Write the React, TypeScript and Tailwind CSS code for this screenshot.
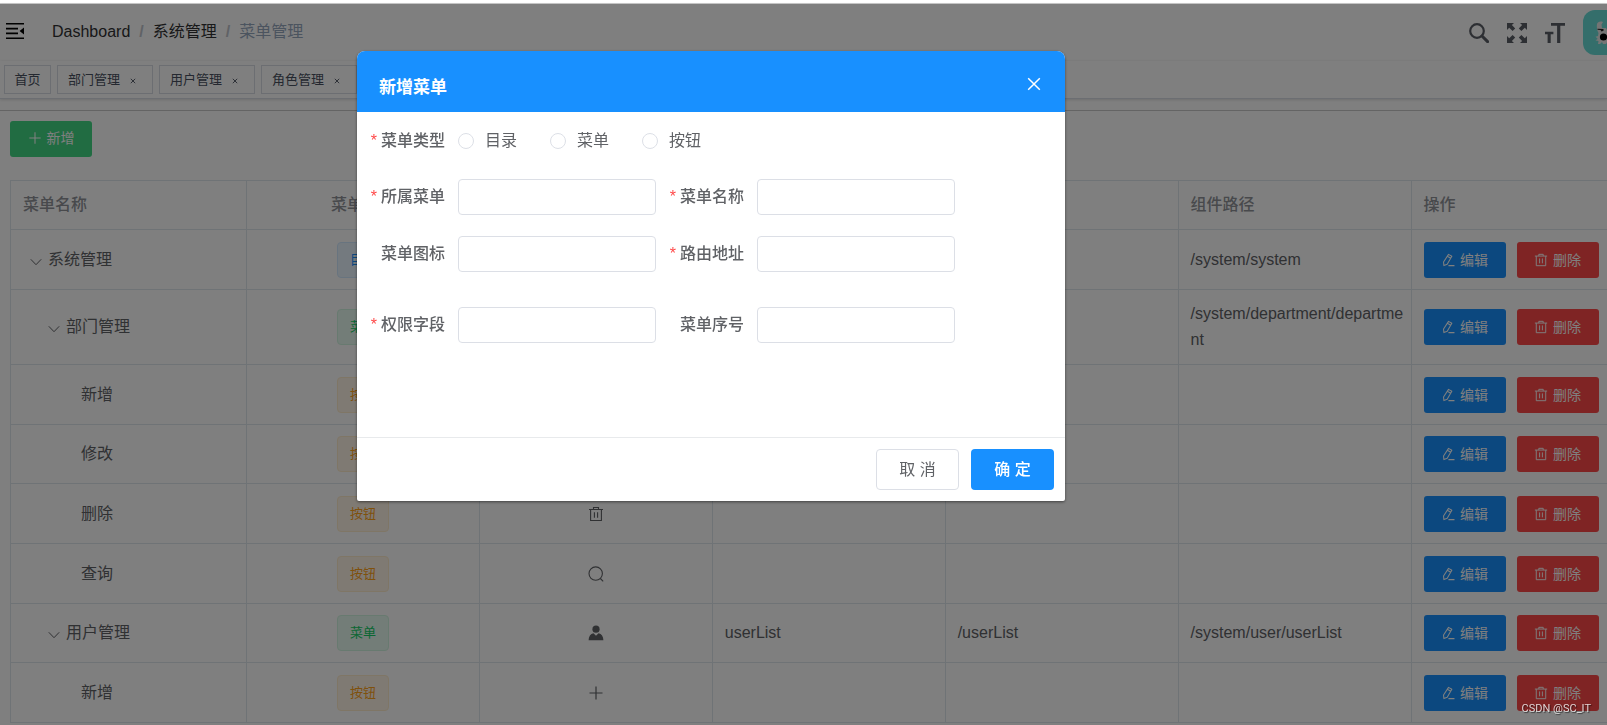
import { useState } from 'react';
import type { ReactNode } from 'react';
import clsx from 'clsx';

type MenuType = '目录' | '菜单' | '按钮';

interface MenuRow {
  id: number;
  name: string;
  level: number;
  type: MenuType;
  icon: ReactNode;
  routeName?: string;
  path?: string;
  component?: string;
}

const menuTypes: MenuType[] = ['目录', '菜单', '按钮'];

const tagStyles: Record<MenuType, string> = {
  目录: 'bg-[#e8f4ff] border-[#d1e9ff] text-[#1890ff]',
  菜单: 'bg-[#e7faf0] border-[#d0f5e0] text-[#13ce66]',
  按钮: 'bg-[#fff4e6] border-[#ffeccc] text-[#ffa31a]',
};

// Iconos
function PlusIcon({ className }: { className?: string }) {
  return (
    <svg viewBox="0 0 16 16" className={className} fill="none" stroke="currentColor" strokeWidth="1.2">
      <path d="M8 1.5v13M1.5 8h13" />
    </svg>
  );
}

function DeleteIcon({ className }: { className?: string }) {
  return (
    <svg viewBox="0 0 16 16" className={className} fill="none" stroke="currentColor" strokeWidth="1.1">
      <path d="M1 3.5h14M5.5 3.3V1.5h5v1.8M2.6 3.6v10.9h10.8V3.6M6.4 6.2v5.6M9.6 6.2v5.6" />
    </svg>
  );
}

function EditIcon({ className }: { className?: string }) {
  return (
    <svg viewBox="0 0 16 16" className={className} fill="none" stroke="currentColor" strokeWidth="1.2" strokeLinejoin="round">
      <path d="M8.6 1.6l3.8 2.2-5.3 9-3.8 1.6-.4-4.1zM7.3 3.8l3.8 2.2M8.5 14.4h6.9" />
    </svg>
  );
}

function SearchThinIcon({ className }: { className?: string }) {
  return (
    <svg viewBox="0 0 16 16" className={className} fill="none" stroke="currentColor" strokeWidth="1.1">
      <circle cx="7.7" cy="7.6" r="6.7" />
      <path d="M12.4 12.5l2.8 2.8" />
    </svg>
  );
}

function UserIcon({ className }: { className?: string }) {
  return (
    <svg viewBox="0 0 16 16" className={className} fill="currentColor">
      <circle cx="8" cy="4.2" r="3.6" />
      <path d="M5.4 8.3L8 10.8l2.6-2.5c2.9.7 4.8 3.3 4.8 6.9H.6c0-3.6 1.9-6.2 4.8-6.9z" />
    </svg>
  );
}

function ChevronIcon() {
  return (
    <svg viewBox="0 0 12 12" className="w-3 h-3 mt-1" fill="none" stroke="currentColor" strokeWidth="1">
      <path d="M.8 3.3L6 8.7l5.2-5.4" />
    </svg>
  );
}

function FoldIcon() {
  return (
    <svg viewBox="0 0 18 16" className="w-[18px] h-4" fill="currentColor">
      <path d="M0 0h18v1.6H0zM0 4.8h12v1.6H0zM0 9.6h12v1.6H0zM0 14.4h18V16H0zM18 4.6v6.8L13.6 8z" />
    </svg>
  );
}

function HeaderSearchIcon() {
  return (
    <svg viewBox="0 0 20 20" className="w-5 h-5" fill="none" stroke="currentColor">
      <circle cx="8" cy="8" r="6.8" strokeWidth="2.2" />
      <path d="M13 13l5.6 5.6" strokeWidth="3" strokeLinecap="round" />
    </svg>
  );
}

function FullscreenIcon() {
  return (
    <svg viewBox="0 0 20 20" className="w-5 h-5" fill="currentColor">
      <path d="M0 0h7L4.9 2.1l3.3 3.3-2.6 2.6-3.4-3.3L0 7z" />
      <path d="M20 0v7l-2.2-2.3L14.4 8l-2.6-2.6 3.3-3.3L13 0z" />
      <path d="M0 20v-7l2.2 2.3L5.6 12l2.6 2.6-3.3 3.3L7 20z" />
      <path d="M20 20h-7l2.1-2.1-3.3-3.3 2.6-2.6 3.4 3.3L20 13z" />
    </svg>
  );
}

function FontSizeIcon() {
  return (
    <svg viewBox="0 0 20 20" className="w-5 h-5" fill="currentColor">
      <path d="M6 0h14v2.7h-4.7V20h-3.2V2.7H6zM0 8.8h8.4v2.4H5.7V20H2.6v-8.8H0z" />
    </svg>
  );
}

function AvatarImage() {
  return (
    <svg viewBox="0 0 45 45" className="w-[45px] h-[45px] rounded-xl bg-[#68dcd6]">
      <path
        d="M14 14c.5-2 3-3 6-2l-1.5 2.5.5 3.5h4l2 4v9l-2 3h-3l-1-2-2 2h-2l.5-3-3-.5 2.2-1.8-2.2-2 2.5-.7.5-3c-1.5-2.500-2-5.500-1.500-9z"
        fill="#e8e8e8"
      />
      <path d="M14.500 18.800l6 .2v1.800l-2 .6-1-1.400-3-.2z" fill="#222" />
      <circle cx="20.500" cy="27" r="3.600" fill="#000" />
    </svg>
  );
}

const visitedTabs = [
  { title: '首页', affix: true },
  { title: '部门管理' },
  { title: '用户管理' },
  { title: '角色管理' },
];

const rows: MenuRow[] = [
  { id: 1, name: '系统管理', level: 0, type: '目录', icon: null, component: '/system/system' },
  { id: 2, name: '部门管理', level: 1, type: '菜单', icon: null, component: '/system/department/department' },
  { id: 3, name: '新增', level: 2, type: '按钮', icon: <PlusIcon className="w-4 h-4" /> },
  { id: 4, name: '修改', level: 2, type: '按钮', icon: <EditIcon className="w-4 h-4" /> },
  { id: 5, name: '删除', level: 2, type: '按钮', icon: <DeleteIcon className="w-4 h-4" /> },
  { id: 6, name: '查询', level: 2, type: '按钮', icon: <SearchThinIcon className="w-4 h-4" /> },
  { id: 7, name: '用户管理', level: 1, type: '菜单', icon: <UserIcon className="w-4 h-4" />, routeName: 'userList', path: '/userList', component: '/system/user/userList' },
  { id: 8, name: '新增', level: 2, type: '按钮', icon: <PlusIcon className="w-4 h-4" /> },
];

function Navbar() {
  return (
    <header className="relative flex items-center h-[57px] pl-1.5 bg-white shadow-[0_1px_4px_rgba(0,21,41,0.08)]">
      <button type="button" aria-label="折叠" className="pb-1 text-black">
        <FoldIcon />
      </button>
      <nav className="flex items-center gap-[9px] ml-7 pb-0.5 text-[#303133]">
        <a href="#dashboard">Dashboard</a>
        <span className="font-bold text-[#c0c4cc]">/</span>
        <a href="#system">系统管理</a>
        <span className="font-bold text-[#c0c4cc]">/</span>
        <span className="text-[#97a8be]">菜单管理</span>
      </nav>
      <div className="flex items-center gap-[18px] ml-auto -mr-[21px] text-[#5a5e66]">
        <button type="button" aria-label="搜索">
          <HeaderSearchIcon />
        </button>
        <button type="button" aria-label="全屏">
          <FullscreenIcon />
        </button>
        <button type="button" aria-label="字号">
          <FontSizeIcon />
        </button>
        <AvatarImage />
      </div>
    </header>
  );
}

function TagsView() {
  return (
    <div className="relative flex items-center gap-1.5 h-[38px] px-1 bg-white border-b border-[#d8dce5] shadow-[0_1px_3px_rgba(0,0,0,0.12),0_0_3px_rgba(0,0,0,0.04)]">
      {visitedTabs.map((tab) => (
        <a
          key={tab.title}
          href="#tab"
          className={clsx(
            'flex items-center h-[29px] border border-[#d8dce5] bg-white text-[13px] text-[#495060]',
            tab.affix ? 'w-[47px] justify-center' : 'w-24 pl-2.5'
          )}
        >
          {tab.title}
          {!tab.affix && (
            <svg viewBox="0 0 6 6" className="w-1.5 h-1.5 ml-2.5 mt-0.5" stroke="currentColor" strokeWidth="0.9">
              <path d="M.8.8l4.400 4.400M5.200.8L.8 5.200" />
            </svg>
          )}
        </a>
      ))}
    </div>
  );
}

function MenuTable() {
  const th = 'border border-[#dfe6ec] pl-3 pr-1 font-medium text-left';
  const td = 'border border-[#dfe6ec] pl-3 pr-1 break-all';

  return (
    <table className="w-full mt-[23px] table-fixed border-collapse border-r-hidden leading-[26px] text-[#606266]">
      <thead>
        <tr className="h-[49px] text-[#909399]">
          <th className={clsx(th, 'w-[236px]')}>菜单名称</th>
          <th className="border border-[#dfe6ec] font-medium text-center">菜单类型</th>
          <th className="border border-[#dfe6ec]" />
          <th className="border border-[#dfe6ec]" />
          <th className="border border-[#dfe6ec]" />
          <th className={th}>组件路径</th>
          <th className="w-[196px] border-y border-l border-[#dfe6ec] pl-3 font-medium text-left">操作</th>
        </tr>
      </thead>
      <tbody>
        {rows.map((row) => (
          <tr key={row.id} className={row.id === 2 ? 'h-[75px]' : 'h-[60px] nth-[3n+4]:h-[59px]'}>
            <td className={td}>
              <div className="flex items-center">
                {row.level === 1 && <span className="w-[18px]" />}
                {row.level === 2 && <span className="w-[58px]" />}
                {row.level < 2 && (
                  <button type="button" aria-label="展开" className="flex justify-center w-[25px]">
                    <ChevronIcon />
                  </button>
                )}
                {row.name}
              </div>
            </td>
            <td className="border border-[#dfe6ec]">
              <span
                className={clsx(
                  'flex items-center justify-center w-[52px] h-9 mx-auto border rounded text-[13px]',
                  tagStyles[row.type]
                )}
              >
                {row.type}
              </span>
            </td>
            <td className="border border-[#dfe6ec]">
              <div className="flex justify-center">{row.icon}</div>
            </td>
            <td className={td}>{row.routeName}</td>
            <td className={td}>{row.path}</td>
            <td className={td}>{row.component}</td>
            <td className="border-y border-l border-[#dfe6ec] pl-3">
              <div className="flex gap-[11px] text-sm text-white">
                <button type="button" className="flex items-center justify-center gap-[5px] w-[82px] h-9 shrink-0 rounded-[3px] bg-[#1890ff]">
                  <EditIcon className="w-3.5 h-3.5" />
                  编辑
                </button>
                <button type="button" className="flex items-center justify-center gap-[5px] w-[82px] h-9 shrink-0 rounded-[3px] bg-[#ff4949]">
                  <DeleteIcon className="w-3.5 h-3.5" />
                  删除
                </button>
              </div>
            </td>
          </tr>
        ))}
      </tbody>
    </table>
  );
}

function FormField({ id, label, required }: { id: string; label: string; required?: boolean }) {
  return (
    <div className="flex items-center">
      <label htmlFor={id} className="w-[90px] pr-[13px] text-right font-medium text-[#606266]">
        {required && <span className="mr-1 font-normal text-[#ff4949]">*</span>}
        {label}
      </label>
      <input id={id} type="text" className="w-[198px] h-9 px-4 bg-white border border-[#dcdfe6] rounded outline-none" />
    </div>
  );
}

function MenuDialog({ onClose }: { onClose: () => void }) {
  const [menuType, setMenuType] = useState<MenuType | ''>('');

  return (
    <div className="fixed inset-x-0 top-1 bottom-0 z-20 bg-black/50">
      <div
        role="dialog"
        aria-label="新增菜单"
        className="w-[708px] mt-[47px] ml-[357px] overflow-hidden rounded-t-lg rounded-b-xs bg-white shadow-[0_1px_3px_rgba(0,0,0,0.5)]"
      >
        <div className="flex items-center justify-between h-[61px] pl-[22px] pr-6 bg-[#1890ff] text-white">
          <h2 className="pt-3 text-[17px] font-bold">新增菜单</h2>
          <button type="button" aria-label="关闭" onClick={onClose} className="pt-1">
            <svg viewBox="0 0 14 14" className="w-3.5 h-3.5" fill="none" stroke="currentColor" strokeWidth="1.5">
              <path d="M1.2 1.2l11.6 11.6M12.8 1.2L1.2 12.8" />
            </svg>
          </button>
        </div>

        <form className="h-[325px] p-[11px]">
          <div className="flex items-center h-9 mb-5 text-[#606266]">
            <span id="menu-type" className="w-[90px] pr-[13px] text-right font-medium">
              <span className="mr-1 font-normal text-[#ff4949]">*</span>
              菜单类型
            </span>
            <div role="radiogroup" aria-labelledby="menu-type" className="flex gap-[33px]">
              {menuTypes.map((type) => (
                <label key={type} className="flex items-center gap-[11px]">
                  <input
                    type="radio"
                    name="menuType"
                    checked={menuType === type}
                    onChange={() => setMenuType(type)}
                    className="appearance-none w-4 h-4 border border-[#dcdfe6] rounded-full bg-white checked:border-[5px] checked:border-[#1890ff]"
                  />
                  {type}
                </label>
              ))}
            </div>
          </div>
          <div className="flex gap-[11px] mb-[21px]">
            <FormField id="parent" label="所属菜单" required />
            <FormField id="name" label="菜单名称" required />
          </div>
          <div className="flex gap-[11px] mb-[35px]">
            <FormField id="icon" label="菜单图标" />
            <FormField id="path" label="路由地址" required />
          </div>
          <div className="flex gap-[11px]">
            <FormField id="code" label="权限字段" required />
            <FormField id="order" label="菜单序号" />
          </div>
        </form>

        <div className="flex justify-end gap-3 p-[11px] border-t border-[#e8eaec]">
          <button type="button" onClick={onClose} className="w-[83px] h-[41px] border border-[#dcdfe6] rounded bg-white text-[#606266]">
            取 消
          </button>
          <button type="button" onClick={onClose} className="w-[83px] h-[41px] rounded bg-[#1890ff] font-medium text-white">
            确 定
          </button>
        </div>
      </div>
    </div>
  );
}

export default function App() {
  const [dialogOpen, setDialogOpen] = useState(true);

  return (
    <div className="h-screen overflow-hidden bg-white font-['Liberation_Sans','Noto_Sans_CJK_SC',sans-serif] text-base">
      <div className="h-1 border-b border-[#c8c8c8]" />
      <Navbar />
      <TagsView />
      <main className="mt-[11px] pt-2.5 pl-2.5 border-t border-[#c8c8c8]">
        <button
          type="button"
          onClick={() => setDialogOpen(true)}
          className="flex items-center justify-center gap-[5px] w-[82px] h-9 pb-0.5 rounded-[3px] bg-[#42d885] text-sm text-white"
        >
          <PlusIcon className="w-3.5 h-3.5" />
          新增
        </button>
        <MenuTable />
      </main>

      {dialogOpen && <MenuDialog onClose={() => setDialogOpen(false)} />}

      <span className="fixed right-4 bottom-2 z-30 font-['Roboto',sans-serif] text-[11px] text-white/80 [text-shadow:1px_1px_1px_rgba(0,0,0,0.6)]">
        CSDN @SC_IT
      </span>
    </div>
  );
}
